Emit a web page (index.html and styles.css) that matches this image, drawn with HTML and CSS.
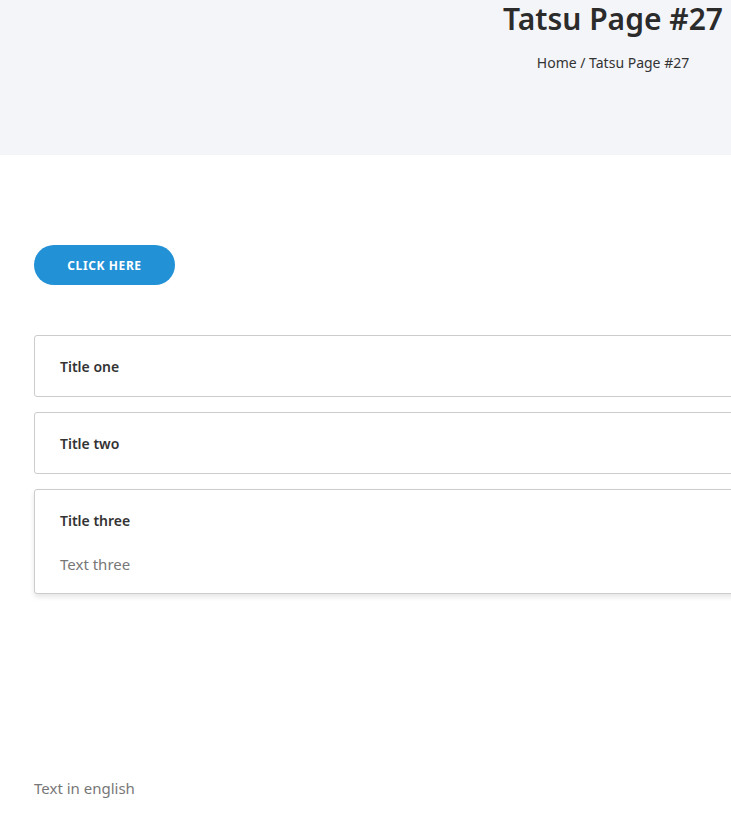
FILE: index.html
```html
<!DOCTYPE html>
<html>
<head>
<meta charset="utf-8">
<link rel="stylesheet" href="styles.css">
</head>
<body>
<div class="page">
  <header class="hero">
    <h1 class="hero-title">Tatsu Page #27</h1>
    <div class="crumbs">Home / Tatsu Page #27</div>
  </header>
  <main class="content">
    <a class="btn" href="#">CLICK HERE</a>
    <div class="accordion">
      <div class="acc-item"><div class="acc-title">Title one</div></div>
      <div class="acc-item"><div class="acc-title">Title two</div></div>
      <div class="acc-item open"><div class="acc-title">Title three</div><div class="acc-body">Text three</div></div>
    </div>
    <p class="foot-text">Text in english</p>
  </main>
</div>
</body>
</html>
```
FILE: styles.css
```css
html, body { margin: 0; padding: 0; }
body { font-family: "Noto Sans", "Open Sans", sans-serif; color: #333; background: #fff; overflow-x: hidden; }
.page { width: 1226px; }
.hero { background: #f4f5f9; height: 155px; box-sizing: border-box; padding-top: 1px; text-align: center; }
.hero-title { margin: 0; font-size: 30px; font-weight: 600; line-height: 36px; color: #2b2b2b; }
.crumbs { margin-top: 16px; font-size: 14px; line-height: 20px; color: #333; }
.content { padding: 90px 34px 0 34px; }
.btn { display: inline-flex; align-items: center; justify-content: center; width: 141px; height: 40px; border-radius: 20px; background: #2291d6; color: #fff; font-size: 12px; font-weight: 700; letter-spacing: 0.6px; text-decoration: none; }
.accordion { margin-top: 50px; display: flex; flex-direction: column; gap: 15px; }
.acc-item { border: 1px solid #ccc; border-radius: 3px; background: #fff; }
.acc-item.open { box-shadow: 0 3px 5px rgba(0,0,0,0.1); }
.acc-title { padding: 21px 25px 19px; font-size: 14px; font-weight: 600; line-height: 20px; color: #333; }
.acc-body { padding: 3px 25px 18px; font-size: 15px; line-height: 22px; color: #777; }
.foot-text { margin: 183px 0 0; font-size: 15px; line-height: 22px; color: #777; }
```
